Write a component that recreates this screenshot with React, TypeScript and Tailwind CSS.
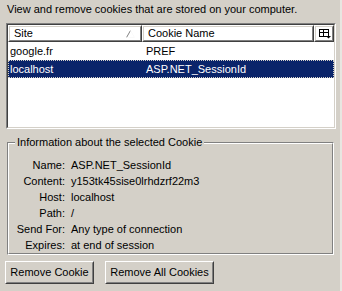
import React from "react";

const sunken =
  "border-t-[#808080] border-l-[#808080] border-b-white border-r-white";

function Raised({ className = "", children }: { className?: string; children?: React.ReactNode }) {
  return (
    <div className={`border border-t-white border-l-white border-b-[#404040] border-r-[#404040] ${className}`}>
      <div className="h-full border border-t-[#d4d0c8] border-l-[#d4d0c8] border-b-[#808080] border-r-[#808080] flex items-center">
        {children}
      </div>
    </div>
  );
}

function Row({ site, name, selected }: { site: string; name: string; selected?: boolean }) {
  return (
    <div
      className={`flex h-[18px] items-center ${
        selected ? "bg-[#0a246a] text-white outline-1 outline-dotted outline-[#d4d0c8] -outline-offset-1" : "text-black"
      }`}
    >
      <div className="w-[135px] pl-[2px]">{site}</div>
      <div className="pl-[3px]">{name}</div>
    </div>
  );
}

function Field({ label, value }: { label: string; value: string }) {
  return (
    <div className="flex h-[16px] items-center">
      <div className="w-[56px] text-right">{label}</div>
      <div className="pl-[6px]">{value}</div>
    </div>
  );
}

export default function App() {
  return (
    <div
      className="w-[342px] h-[291px] bg-[#d4d0c8] text-black text-[11px] leading-[13px] overflow-hidden relative border-r-2 border-r-[#e8e6e1]"
      style={{ fontFamily: '"Liberation Sans", Arial, sans-serif' }}
    >
      <div className="pl-[7px] pt-[3px] h-[23px]">View and remove cookies that are stored on your computer.</div>

      <div className={`ml-[6px] w-[330px] h-[106px] border ${sunken}`}>
        <div className="h-full border border-t-[#404040] border-l-[#404040] border-b-[#d4d0c8] border-r-[#d4d0c8] bg-white">
          <div className="flex h-[17px]">
            <Raised className="w-[134px] h-[17px]">
              <span className="pl-[4px] flex-1">Site</span>
              <svg width="9" height="8" viewBox="0 0 9 8" className="mr-[5px]">
                <path d="M0.5 7.5 L4.5 0.5" stroke="#808080" fill="none" />
                <path d="M4.5 0.5 L8.5 7.5 M0.5 7.5 L8.5 7.5" stroke="#fafafa" fill="none" />
              </svg>
            </Raised>
            <Raised className="w-[172px] h-[17px]">
              <span className="pl-[4px]">Cookie Name</span>
            </Raised>
            <Raised className="w-[20px] h-[17px]">
              <svg width="12" height="10" viewBox="0 0 12 10" className="ml-[3px]">
                <rect x="0.5" y="0.5" width="9" height="7" fill="none" stroke="#000" />
                <path d="M0.5 3.5 H9.5 M4.5 0.5 V7.5" stroke="#000" />
                <path d="M7 7 H12 L9.5 9.5 Z" fill="#000" />
              </svg>
            </Raised>
          </div>
          <Row site="google.fr" name="PREF" />
          <Row site="localhost" name="ASP.NET_SessionId" selected />
        </div>
      </div>

      <div className="relative ml-[7px] mt-[13px] w-[327px] h-[113px] border border-t-[#808080] border-l-[#808080] border-b-white border-r-white">
        <div className="h-full border border-t-white border-l-white border-b-[#808080] border-r-[#808080] pt-[13px]">
          <div className="absolute -top-[7px] left-[7px] bg-[#d4d0c8] px-[2px]">
            Information about the selected Cookie
          </div>
          <Field label="Name:" value="ASP.NET_SessionId" />
          <Field label="Content:" value="y153tk45sise0lrhdzrf22m3" />
          <Field label="Host:" value="localhost" />
          <Field label="Path:" value="/" />
          <Field label="Send For:" value="Any type of connection" />
          <Field label="Expires:" value="at end of session" />
        </div>
      </div>

      <div className="flex gap-[11px] ml-[5px] mt-[6px]">
        <Raised className="w-[89px] h-[23px]">
          <span className="w-full text-center">Remove Cookie</span>
        </Raised>
        <Raised className="w-[109px] h-[23px]">
          <span className="w-full text-center">Remove All Cookies</span>
        </Raised>
      </div>
    </div>
  );
}
